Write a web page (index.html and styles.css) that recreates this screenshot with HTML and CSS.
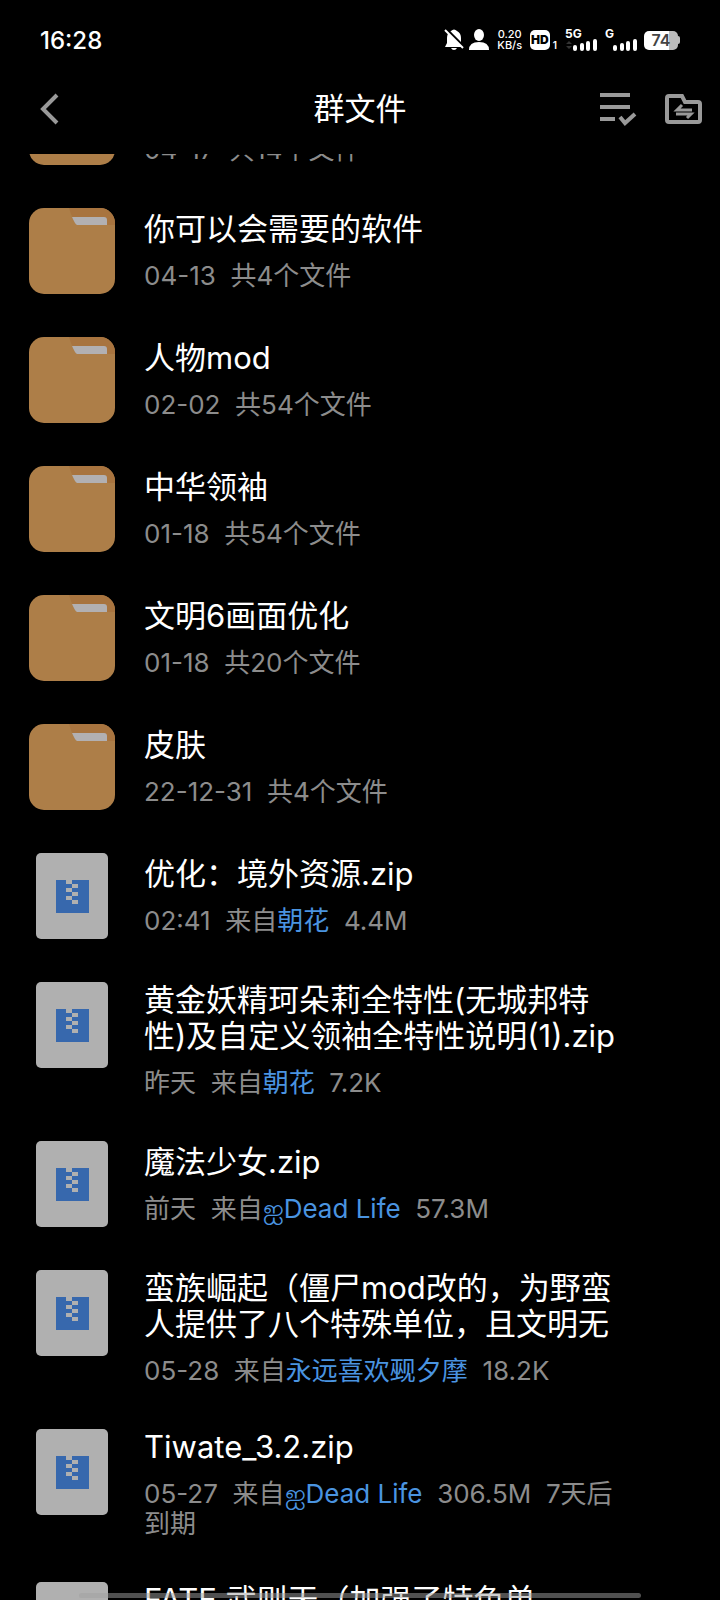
FILE: index.html
```html
<!DOCTYPE html>
<html lang="zh-CN">

<head>
    <meta charset="UTF-8">
    <meta name="viewport" content="width=device-width, initial-scale=1.0">
    <title>群文件</title>
    <link rel="stylesheet" href="styles.css">
</head>

<body>
    <!-- shared icons -->
    <svg class="defs" aria-hidden="true">
        <symbol id="folder" viewBox="0 0 86 86">
            <rect width="86" height="86" rx="15" fill="#ad7e48"/>
            <path d="M40 0H71A15 15 0 0 1 86 15V17H48Q44 13 40 0Z" fill="#a8743f"/>
            <path d="M43 9H75Q78 9 78 12V17H48Q46 16 43 9Z" fill="#b2b0b2"/>
        </symbol>
        <symbol id="zip" viewBox="0 0 86 86">
            <rect x="7" width="72" height="86" rx="5" fill="#b0b0b0"/>
            <rect x="27" y="27" width="33" height="33" fill="#3768ad"/>
            <path d="M37 27h6v4h-6zM43 31h6v4h-6zM37 35h6v4h-6zM43 39h6v4h-6zM37 43h6v4h-6zM43 47h6v4h-6z" fill="#b0b0b0"/>
        </symbol>
        <symbol id="signal" viewBox="0 0 24 12">
            <path d="M2 8v2M9 6v4M15 4v6M22 2v8" stroke="#fff" stroke-width="4" stroke-linecap="round"/>
        </symbol>
    </svg>

    <div class="screen">
        <div class="status-bar">
            <span class="clock">16:28</span>
            <div class="status-icons">
                <svg width="20" height="22" viewBox="0 0 20 22" fill="#fff">
                    <path d="M7 2Q10-1 13 2Q17 4 17 9V14L19 18H1L3 14V9Q3 4 7 2ZM7 19H13Q12 21 10 21T7 19Z"/>
                    <path d="M2 0L20 18" stroke="#000" stroke-width="3"/>
                    <path d="M1 1L19 19" stroke="#fff" stroke-width="2"/>
                </svg>
                <svg class="person" width="20" height="22" viewBox="0 0 20 22" fill="#fff">
                    <ellipse cx="10" cy="6" rx="5" ry="6"/>
                    <path d="M0 21Q0 13 10 13T20 21Z"/>
                </svg>
                <div class="speed"><span>0.20</span><span>KB/s</span></div>
                <div class="hd"><b>HD</b><small>1</small></div>
                <div class="network">
                    <b>5G</b>
                    <div class="bars">
                        <svg width="8" height="12" viewBox="0 0 8 12" fill="#333"><path d="M1 5L4 2L7 5ZM1 7H7L4 10Z"/></svg>
                        <svg width="24" height="12"><use href="#signal"/></svg>
                    </div>
                </div>
                <div class="network">
                    <b>G</b>
                    <div class="bars bars-g"><svg width="24" height="12"><use href="#signal"/></svg></div>
                </div>
                <div class="battery"><span>74</span></div>
            </div>
        </div>

        <header class="nav">
            <button class="back" aria-label="返回">
                <svg width="20" height="32" viewBox="0 0 20 32" fill="none" stroke="#999" stroke-width="4">
                    <path d="M18 2L4 16L18 30"/>
                </svg>
            </button>
            <h1>群文件</h1>
            <div class="actions">
                <button aria-label="多选">
                    <svg width="38" height="36" viewBox="0 0 38 36" fill="none" stroke="#999" stroke-width="4">
                        <path d="M1 4H31M1 16H31M1 28H16"/>
                        <path d="M21 26L26 32L36 23"/>
                    </svg>
                </button>
                <button aria-label="传输列表">
                    <svg width="38" height="36" viewBox="0 0 38 36" fill="none" stroke="#999" stroke-width="4">
                        <path d="M4 5H17L20 11H33Q35 11 35 13V29Q35 31 33 31H4Q2 31 2 29V7Q2 5 4 5Z"/>
                        <path d="M27 19H12L17 14M11 23H26L22 27" stroke-width="3"/>
                    </svg>
                </button>
            </div>
        </header>

        <main class="files">
            <ul>
                <li>
                    <svg class="icon"><use href="#folder"/></svg>
                    <div class="info">
                        <p>04-17&nbsp; 共14个文件</p>
                    </div>
                </li>
                <li>
                    <svg class="icon"><use href="#folder"/></svg>
                    <div class="info">
                        <h2>你可以会需要的软件</h2>
                        <p>04-13&nbsp; 共4个文件</p>
                    </div>
                </li>
                <li>
                    <svg class="icon"><use href="#folder"/></svg>
                    <div class="info">
                        <h2>人物mod</h2>
                        <p>02-02&nbsp; 共54个文件</p>
                    </div>
                </li>
                <li>
                    <svg class="icon"><use href="#folder"/></svg>
                    <div class="info">
                        <h2>中华领袖</h2>
                        <p>01-18&nbsp; 共54个文件</p>
                    </div>
                </li>
                <li>
                    <svg class="icon"><use href="#folder"/></svg>
                    <div class="info">
                        <h2>文明6画面优化</h2>
                        <p>01-18&nbsp; 共20个文件</p>
                    </div>
                </li>
                <li>
                    <svg class="icon"><use href="#folder"/></svg>
                    <div class="info">
                        <h2>皮肤</h2>
                        <p>22-12-31&nbsp; 共4个文件</p>
                    </div>
                </li>
                <li>
                    <svg class="icon"><use href="#zip"/></svg>
                    <div class="info">
                        <h2>优化：境外资源.zip</h2>
                        <p>02:41&nbsp; 来自<a href="#">朝花</a>&nbsp; 4.4M</p>
                    </div>
                </li>
                <li>
                    <svg class="icon"><use href="#zip"/></svg>
                    <div class="info">
                        <h2>黄金妖精珂朵莉全特性(无城邦特性)及自定义领袖全特性说明(1).zip</h2>
                        <p>昨天&nbsp; 来自<a href="#">朝花</a>&nbsp; 7.2K</p>
                    </div>
                </li>
                <li>
                    <svg class="icon"><use href="#zip"/></svg>
                    <div class="info">
                        <h2>魔法少女.zip</h2>
                        <p>前天&nbsp; 来自<a href="#">ஐDead Life</a>&nbsp; 57.3M</p>
                    </div>
                </li>
                <li>
                    <svg class="icon"><use href="#zip"/></svg>
                    <div class="info">
                        <h2>蛮族崛起（僵尸mod改的，为野蛮人提供了八个特殊单位，且文明无</h2>
                        <p>05-28&nbsp; 来自<a href="#">永远喜欢觋夕摩</a>&nbsp; 18.2K</p>
                    </div>
                </li>
                <li>
                    <svg class="icon"><use href="#zip"/></svg>
                    <div class="info">
                        <h2>Tiwate_3.2.zip</h2>
                        <p>05-27&nbsp; 来自<a href="#">ஐDead Life</a>&nbsp; 306.5M&nbsp; 7天后到期</p>
                    </div>
                </li>
                <li>
                    <svg class="icon"><use href="#zip"/></svg>
                    <div class="info">
                        <h2>FATE 武则天（加强了特色单</h2>
                    </div>
                </li>
            </ul>
        </main>
    </div>
    <div class="home-bar"></div>
</body>

</html>
```
FILE: styles.css
```css
* {
    box-sizing: border-box;
}

body {
    margin: 0;
    background-color: #000;
    color: #fff;
    font-family: Inter, "Noto Sans CJK SC", sans-serif;
}

h1, h2, p, ul {
    margin: 0;
    padding: 0;
    font-weight: normal;
}

button {
    padding: 0;
    border: none;
    background: none;
    cursor: pointer;
}

svg {
    display: block;
    flex-shrink: 0;
}

.defs {
    display: none;
}

.screen {
    display: flex;
    flex-direction: column;
    height: 100vh;
    overflow: hidden;
}

/* status bar */
.status-bar {
    display: flex;
    justify-content: space-between;
    align-items: center;
    height: 64px;
    padding: 16px 40px 0;
    flex-shrink: 0;
}

.clock {
    font-size: 24px;
    font-weight: 500;
}

.status-icons {
    display: flex;
    align-items: center;
    height: 24px;
}

.person {
    margin-left: 5px;
}

.speed {
    display: flex;
    flex-direction: column;
    align-items: center;
    margin-left: 8px;
    font-size: 11px;
    line-height: 11px;
    font-weight: 500;
}

.hd {
    display: flex;
    align-items: flex-end;
    gap: 3px;
    margin-left: 8px;
}

.hd b {
    padding: 0 1px;
    border-radius: 5px;
    background-color: #fff;
    color: #000;
    font-size: 12px;
    font-weight: 900;
    line-height: 20px;
}

.hd small {
    font-size: 10px;
    font-weight: 600;
    line-height: 10px;
}

.network {
    margin-left: 8px;
    font-size: 12px;
    line-height: 10px;
}

.bars {
    display: flex;
}

.bars-g {
    padding-left: 8px;
}

.battery {
    display: flex;
    align-items: center;
    margin-left: 7px;
}

.battery span {
    width: 34px;
    border-radius: 5px;
    background: linear-gradient(to right, #fff 74%, #bbb 74%);
    color: #444;
    font-size: 16px;
    font-weight: 600;
    line-height: 19px;
    text-align: center;
}

.battery::after {
    content: "";
    width: 2px;
    height: 8px;
    border-radius: 0 2px 2px 0;
    background-color: #bbb;
}

/* title bar */
.nav {
    display: grid;
    grid-template-columns: 1fr auto 1fr;
    align-items: center;
    height: 90px;
    padding: 0 17px;
    flex-shrink: 0;
}

.back {
    justify-self: start;
    padding-left: 22px;
}

.nav h1 {
    font-size: 31px;
    line-height: 36px;
}

.actions {
    display: flex;
    justify-content: flex-end;
    gap: 28px;
}

/* file list, scrolled part of the way down */
.files {
    flex: 1;
    overflow: hidden;
}

.files ul {
    margin-top: -97px;
    list-style: none;
}

.files li {
    display: flex;
    padding: 22px 104px 21px 29px;
    gap: 29px;
}

.icon {
    width: 86px;
    height: 86px;
}

.info {
    flex: 1;
    align-self: center;
}

.files li:first-child .info {
    align-self: flex-end;
}

.files li:last-child .info {
    align-self: flex-start;
}

.info h2 {
    font-size: 31px;
    line-height: 36px;
}

.info p {
    margin-top: 14px;
    color: #8c8c8c;
    font-size: 26px;
    line-height: 30px;
}

.info a {
    color: #4a94e0;
    text-decoration: none;
}

.home-bar {
    position: fixed;
    left: 11%;
    right: 11%;
    bottom: 2px;
    height: 5px;
    border-radius: 3px;
    background-color: rgba(160, 160, 160, 0.5);
}
```
